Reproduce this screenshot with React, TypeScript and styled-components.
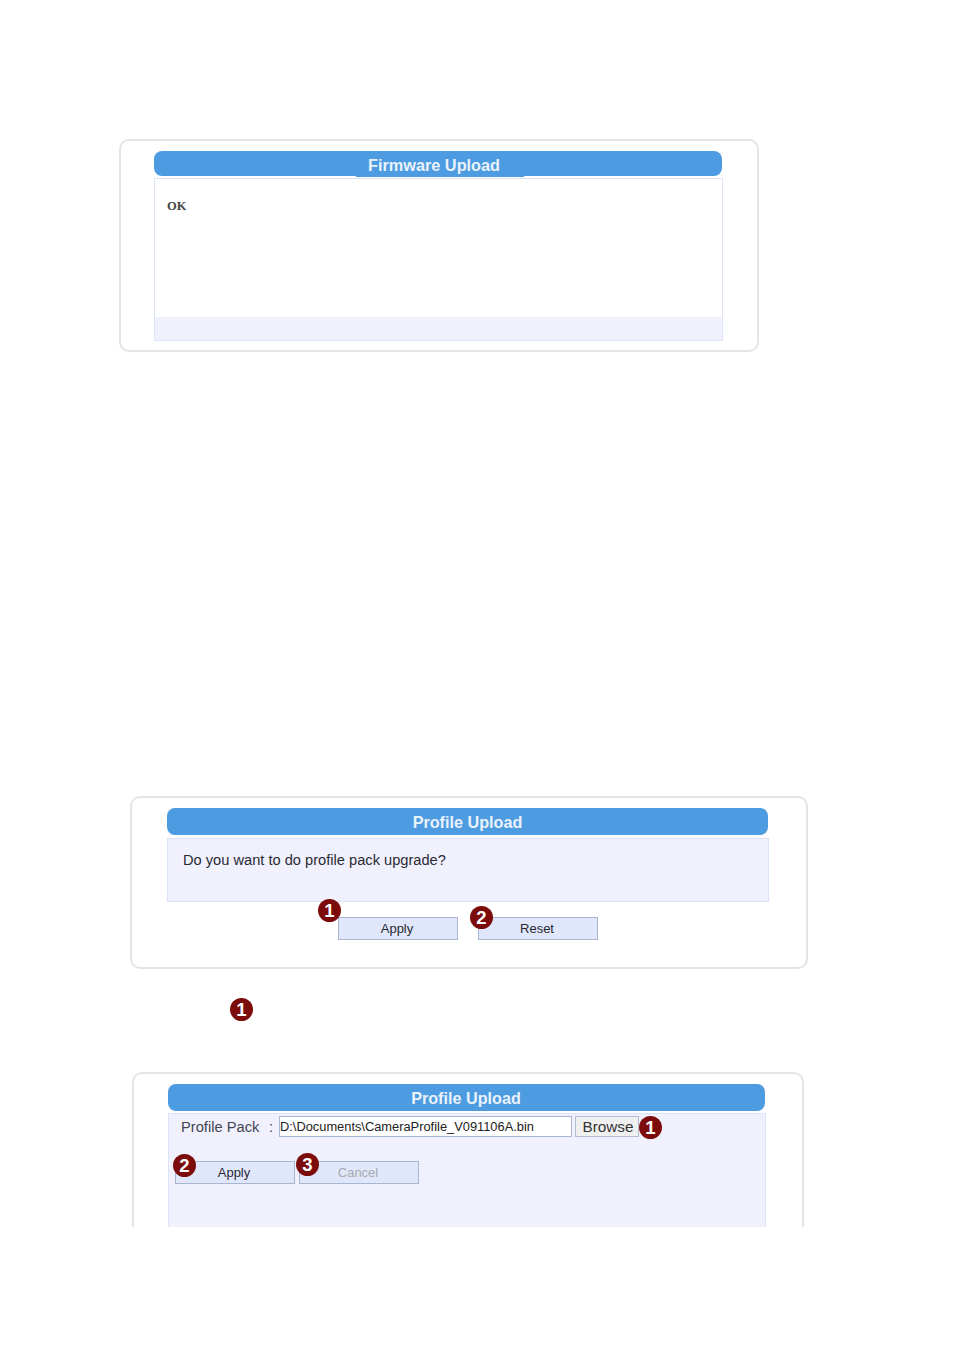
import React from "react";
import styled, { createGlobalStyle } from "styled-components";

const GlobalStyle = createGlobalStyle`
  html, body {
    margin: 0;
    padding: 0;
    background: #ffffff;
  }
  body {
    font-family: "Liberation Sans", Arial, sans-serif;
    color: #333333;
  }
  * {
    box-sizing: border-box;
  }
`;

const Page = styled.div`
  width: 954px;
  height: 1350px;
  padding-top: 139px;
  overflow: hidden;
`;

const Panel = styled.section<{
  $left: number;
  $top: number;
  $width: number;
  $height: number;
  $padLeft: number;
  $open?: boolean;
}>`
  display: flex;
  flex-direction: column;
  margin: ${(p) => p.$top}px 0 0 ${(p) => p.$left}px;
  width: ${(p) => p.$width}px;
  height: ${(p) => p.$height}px;
  padding: 10px 0 0 ${(p) => p.$padLeft}px;
  background: #ffffff;
  border: 2px solid #e4e4e4;
  border-radius: ${(p) => (p.$open ? "10px 10px 0 0" : "10px")};
  ${(p) => p.$open && "border-bottom: none;"}
`;

const Title = styled.h2<{ $width: number; $height: number; $shift?: number }>`
  margin: 0;
  width: ${(p) => p.$width}px;
  height: ${(p) => p.$height}px;
  flex-shrink: 0;
  padding-right: ${(p) => p.$shift ?? 0}px;
  background: #4d9be0;
  border-radius: 8px;
  color: #e9f2fb;
  font-size: 16.2px;
  font-weight: bold;
  line-height: ${(p) => p.$height + 1}px;
  text-align: center;
`;

const FirmwareLabel = styled.span`
  display: inline-block;
  height: 26px;
  margin-left: 4px;
  padding: 0 24px 0 12px;
  background: #4d9be0;
  font-size: 16.3px;
  line-height: 29px;
  vertical-align: top;
`;

const Body = styled.div<{ $width: number; $height?: number; $gap: number; $white?: boolean; $open?: boolean }>`
  width: ${(p) => p.$width}px;
  ${(p) => (p.$height ? `height: ${p.$height}px;` : "flex: 1;")}
  margin-top: ${(p) => p.$gap}px;
  background: ${(p) => (p.$white ? "#ffffff" : "#f0f1fd")};
  border: 1px solid #dbe4fb;
  ${(p) => p.$open && "border-bottom: none;"}
`;

const StatusText = styled.p`
  height: 138px;
  margin: 0;
  padding: 20px 0 0 12px;
  font-family: "Liberation Serif", "Times New Roman", serif;
  font-size: 12.5px;
  font-weight: bold;
  line-height: 15px;
  color: #444444;
`;

const StatusFooter = styled.div`
  height: 23px;
  background: #f0f1fd;
`;

const Question = styled.p`
  margin: 0;
  padding: 13px 0 0 15px;
  font-size: 14.65px;
  line-height: 17px;
  color: #2a2a33;
`;

const ButtonRow = styled.div<{ $top: number; $left: number; $gap: number }>`
  display: flex;
  gap: ${(p) => p.$gap}px;
  margin-top: ${(p) => p.$top}px;
  padding-left: ${(p) => p.$left}px;
`;

const ActionButton = styled.button`
  position: relative;
  width: 120px;
  height: 23px;
  padding: 0 2px 0 0;
  background: #e1e7fb;
  border: 1px solid #a9b6d2;
  color: #2a2a33;
  font-family: "Liberation Sans", Arial, sans-serif;
  font-size: 13px;
  line-height: 21px;

  &:disabled {
    color: #a9a9ad;
  }
`;

const Badge = styled.span<{ $x?: number; $y?: number }>`
  display: flex;
  align-items: center;
  justify-content: center;
  flex-shrink: 0;
  width: 23px;
  height: 23px;
  border-radius: 50%;
  background: #7c0c0c;
  color: #ffffff;
  font-family: "Liberation Sans", Arial, sans-serif;
  font-size: 18.5px;
  font-weight: bold;
  line-height: 23px;
  ${(p) =>
    p.$x !== undefined &&
    `position: absolute; left: ${p.$x}px; top: ${p.$y}px;`}
`;

const BrowseBadge = styled(Badge)`
  margin-top: 1px;
`;

const NoteRow = styled.div`
  margin-top: 29px;
  padding-left: 230px;
  height: 23px;
`;

const FileRow = styled.div`
  display: flex;
  align-items: center;
  height: 23px;
  margin-top: 1px;
  padding-left: 12px;
  font-size: 14.7px;
  color: #444450;
`;

const FieldLabel = styled.label`
  display: flex;
  justify-content: space-between;
  width: 92px;
  margin-right: 6px;
`;

const PathInput = styled.input`
  width: 293px;
  height: 21px;
  padding: 0;
  background: #ffffff;
  border: 1px solid #a9b6d2;
  color: #222222;
  font-family: "Liberation Sans", Arial, sans-serif;
  font-size: 12.85px;
  outline: none;
`;

const BrowseButton = styled.button`
  width: 64px;
  height: 21px;
  margin-left: 3px;
  padding: 0 0 0 2px;
  background: #f0f0f0;
  border: 1px solid #b4bcd4;
  color: #333333;
  font-family: "Liberation Sans", Arial, sans-serif;
  font-size: 15.3px;
  line-height: 19px;
`;

const App = () => {
  return (
    <Page>
      <GlobalStyle />

      <Panel $left={119} $top={0} $width={640} $height={213} $padLeft={33}>
        <Title $width={568} $height={25}>
          <FirmwareLabel>Firmware Upload</FirmwareLabel>
        </Title>
        <Body $width={569} $height={163} $gap={2} $white>
          <StatusText>OK</StatusText>
          <StatusFooter />
        </Body>
      </Panel>

      <Panel $left={130} $top={444} $width={678} $height={173} $padLeft={35}>
        <Title $width={601} $height={27}>Profile Upload</Title>
        <Body $width={602} $height={64} $gap={3}>
          <Question>Do you want to do profile pack upgrade?</Question>
        </Body>
        <ButtonRow $top={15} $left={171} $gap={20}>
          <ActionButton>
            Apply
            <Badge $x={-21} $y={-19}>1</Badge>
          </ActionButton>
          <ActionButton>
            Reset
            <Badge $x={-9} $y={-12}>2</Badge>
          </ActionButton>
        </ButtonRow>
      </Panel>

      <NoteRow>
        <Badge>1</Badge>
      </NoteRow>

      <Panel $left={132} $top={51} $width={672} $height={155} $padLeft={34} $open>
        <Title $width={597} $height={27} $shift={1}>Profile Upload</Title>
        <Body $width={598} $gap={2} $open>
          <FileRow>
            <FieldLabel>
              <span>Profile Pack</span>
              <span>:</span>
            </FieldLabel>
            <PathInput readOnly value="D:\Documents\CameraProfile_V091106A.bin" />
            <BrowseButton>Browse</BrowseButton>
            <BrowseBadge>1</BrowseBadge>
          </FileRow>
          <ButtonRow $top={23} $left={6} $gap={4}>
            <ActionButton>
              Apply
              <Badge $x={-3} $y={-8}>2</Badge>
            </ActionButton>
            <ActionButton disabled>
              Cancel
              <Badge $x={-4} $y={-9}>3</Badge>
            </ActionButton>
          </ButtonRow>
        </Body>
      </Panel>
    </Page>
  );
};

export default App;
